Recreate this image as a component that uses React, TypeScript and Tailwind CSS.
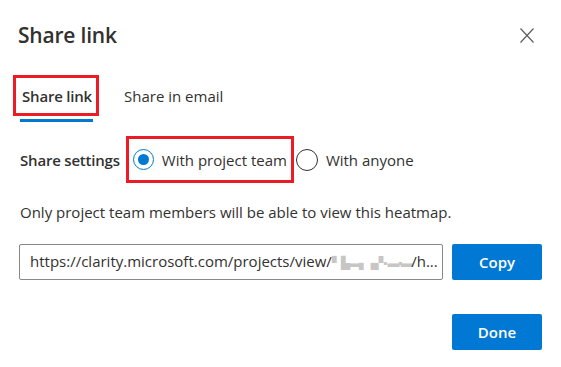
import React from "react";

export default function App() {
  return (
    <div className="w-[561px] h-[367px] bg-white text-[#323130] font-['Open_Sans',sans-serif] overflow-hidden">
      {/* Header */}
      <div className="flex items-center justify-between pt-[21px] pl-[18px] pr-[27px] h-[49px]">
        <div className="text-[21px] leading-[28px] font-semibold tracking-[-0.2px]">Share link</div>
        <svg width="14" height="15" viewBox="0 0 14 15" className="text-[#605e5c]">
          <path d="M0.5 0.5 L13.5 14.5 M13.5 0.5 L0.5 14.5" stroke="currentColor" strokeWidth="1.2" fill="none" />
        </svg>
      </div>

      {/* Tabs */}
      <div className="flex items-start mt-[26px] pl-[13px]">
        <div className="flex flex-col items-start">
          <div className="border-[3px] border-[#ec1c24] h-[41px] w-[86px] flex items-center pl-[6px]">
            <span className="text-[15px] leading-[20px] font-semibold tracking-[-0.2px]">Share link</span>
          </div>
          <div className="mt-[3px] ml-[7px] h-[3px] w-[73px] bg-[#0078d4]" />
        </div>
        <div className="h-[41px] flex items-center ml-[25px]">
          <span className="text-[15px] leading-[20px]">Share in email</span>
        </div>
      </div>

      {/* Share settings */}
      <div className="flex items-center mt-[14px] pl-[20px] h-[47px]">
        <span className="text-[15px] leading-[20px] font-semibold tracking-[-0.2px]">Share settings</span>
        <div className="ml-[6px] border-[3px] border-[#ec1c24] h-[47px] flex items-center pl-[4px] pr-[4px]">
          <div className="w-[21px] h-[21px] rounded-full border border-[#0078d4] flex items-center justify-center">
            <div className="w-[11px] h-[11px] rounded-full bg-[#0078d4]" />
          </div>
          <span className="ml-[8px] text-[15px] leading-[20px]">With project team</span>
        </div>
        <div className="ml-[2px] w-[22px] h-[22px] rounded-full border border-[#323130]" />
        <span className="ml-[8px] text-[15px] leading-[20px]">With anyone</span>
      </div>

      {/* Info */}
      <div className="mt-[19px] pl-[20px] text-[15px] leading-[20px]">
        Only project team members will be able to view this heatmap.
      </div>

      {/* Link row */}
      <div className="flex mt-[22px] pl-[19px]">
        <div className="w-[424px] h-[36px] border border-[#8a8886] rounded-[2px] flex items-center pl-[10px] pr-[8px] overflow-hidden">
          <span className="text-[15px] leading-[20px] whitespace-nowrap">
            https://clarity.microsoft.com/projects/view/
            <span className="text-[#c8c6c4] text-[12px] tracking-[-1.5px]">▘ ▙▬▖▗▞ ▪ ▬▪▬</span>
            /h...
          </span>
        </div>
        <button className="ml-[9px] w-[90px] h-[36px] rounded-[2px] bg-[#0078d4] text-white text-[15px] font-semibold">
          Copy
        </button>
      </div>

      {/* Footer */}
      <div className="flex justify-end mt-[34px] pr-[19px]">
        <button className="w-[90px] h-[36px] rounded-[2px] bg-[#0078d4] text-white text-[15px] font-semibold">
          Done
        </button>
      </div>
    </div>
  );
}
